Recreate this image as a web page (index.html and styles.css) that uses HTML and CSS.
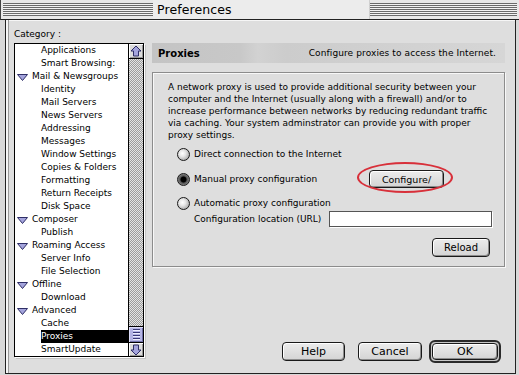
FILE: index.html
```html
<!DOCTYPE html>
<html>
<head>
<meta charset="utf-8">
<link rel="stylesheet" href="styles.css">
</head>
<body>
<div class="screen">
  <div class="titlebar">
    <div class="stripes stripes-left"></div>
    <div class="title">Preferences</div>
    <div class="stripes stripes-right"></div>
  </div>
  <div class="frame">
    <div class="window">
      <div class="col-left">
        <div class="cat-label">Category :</div>
        <div class="listbox">
          <ul class="tree">
            <li class="child">Applications</li>
            <li class="child">Smart Browsing:</li>
            <li class="parent"><svg class="disc" width="11" height="7" viewBox="0 0 11 7"><path d="M0.5 0.5 H10.5 L5.5 6.5 Z" fill="#a4a4dc" stroke="#2e2e66"/></svg>Mail &amp; Newsgroups</li>
            <li class="child">Identity</li>
            <li class="child">Mail Servers</li>
            <li class="child">News Servers</li>
            <li class="child">Addressing</li>
            <li class="child">Messages</li>
            <li class="child">Window Settings</li>
            <li class="child">Copies &amp; Folders</li>
            <li class="child">Formatting</li>
            <li class="child">Return Receipts</li>
            <li class="child">Disk Space</li>
            <li class="parent"><svg class="disc" width="11" height="7" viewBox="0 0 11 7"><path d="M0.5 0.5 H10.5 L5.5 6.5 Z" fill="#a4a4dc" stroke="#2e2e66"/></svg>Composer</li>
            <li class="child">Publish</li>
            <li class="parent"><svg class="disc" width="11" height="7" viewBox="0 0 11 7"><path d="M0.5 0.5 H10.5 L5.5 6.5 Z" fill="#a4a4dc" stroke="#2e2e66"/></svg>Roaming Access</li>
            <li class="child">Server Info</li>
            <li class="child">File Selection</li>
            <li class="parent"><svg class="disc" width="11" height="7" viewBox="0 0 11 7"><path d="M0.5 0.5 H10.5 L5.5 6.5 Z" fill="#a4a4dc" stroke="#2e2e66"/></svg>Offline</li>
            <li class="child">Download</li>
            <li class="parent"><svg class="disc" width="11" height="7" viewBox="0 0 11 7"><path d="M0.5 0.5 H10.5 L5.5 6.5 Z" fill="#a4a4dc" stroke="#2e2e66"/></svg>Advanced</li>
            <li class="child">Cache</li>
            <li class="child"><span class="sel">Proxies</span></li>
            <li class="child">SmartUpdate</li>
          </ul>
          <div class="scrollbar">
            <div class="sb-arrow sb-up"><svg width="12" height="12" viewBox="0 0 12 12"><path d="M6 1 L11 6 H8.5 V11 H3.5 V6 H1 Z" fill="#a4a4dc" stroke="#2e2e66" stroke-linejoin="round"/></svg></div>
            <div class="sb-track"></div>
            <div class="sb-thumb"><span></span><span></span><span></span><span></span></div>
            <div class="sb-arrow sb-down"><svg width="12" height="12" viewBox="0 0 12 12"><path d="M6 11 L11 6 H8.5 V1 H3.5 V6 H1 Z" fill="#a4a4dc" stroke="#2e2e66" stroke-linejoin="round"/></svg></div>
          </div>
        </div>
      </div>
      <div class="col-right">
        <div class="panel-head">
          <span class="ph-title">Proxies</span>
          <span class="ph-desc">Configure proxies to access the Internet.</span>
        </div>
        <div class="groupbox">
          <p class="intro">A network proxy is used to provide additional security between your<br>computer and the Internet (usually along with a firewall) and/or to<br>increase performance between networks by reducing redundant traffic<br>via caching. Your system adminstrator can provide you with proper<br>proxy settings.</p>
          <div class="radio-row row-direct"><span class="radio"></span><span class="rlabel">Direct connection to the Internet</span></div>
          <div class="radio-row row-manual"><span class="radio on"></span><span class="rlabel rlabel-fixed">Manual proxy configuration</span><span class="btn-wrap"><button class="btn btn-config">Configure/</button><span class="circle"></span></span></div>
          <div class="radio-row row-auto"><span class="radio"></span><span class="rlabel">Automatic proxy configuration</span></div>
          <div class="url-row"><span class="url-label">Configuration location (URL)</span><span class="field"></span></div>
          <div class="reload-row"><button class="btn btn-reload">Reload</button></div>
        </div>
        <div class="dialog-buttons">
          <button class="btn btn-help">Help</button>
          <button class="btn btn-cancel">Cancel</button>
          <span class="default-ring"><button class="btn btn-ok">OK</button></span>
        </div>
      </div>
    </div>
  </div>
</div>
</body>
</html>
```
FILE: styles.css
```css
* { box-sizing: border-box; }
html, body { margin: 0; padding: 0; }
body {
  width: 519px;
  height: 375px;
  background: #e6e6e6;
  font-family: "DejaVu Sans", "Liberation Sans", sans-serif;
  font-size: 9px;
  color: #000;
  overflow: hidden;
}
.screen { width: 519px; height: 375px; }

/* title bar */
.titlebar {
  height: 20px;
  display: flex;
  background: #e8e8e8;
  border-bottom: 1px solid #222;
  border-left: 1px solid #444;
}
.stripes {
  height: 13px;
  margin-top: 3px;
  background: repeating-linear-gradient(to bottom, #6a6a6a 0 1px, #f2f2f2 1px 2px);
}
.stripes-left { width: 150px; margin-left: 2px; }
.title {
  width: 217px;
  padding-left: 4px;
  font-size: 12.5px;
  line-height: 19px;
  letter-spacing: 0.1px;
  background: #ececec;
  border-right: 1px solid #cfcfcf;
}
.stripes-right { flex: 1; margin-right: 2px; }

/* frame */
.frame {
  padding-left: 5px;
  height: 355px;
  background: #d8d8d8;
}
.window {
  width: 511px;
  height: 354px;
  display: flex;
  gap: 8px;
  background: #dedede;
  border-left: 1px solid #222;
  border-right: 1px solid #222;
  border-bottom: 1px solid #222;
  box-shadow: inset 2px 0 0 #f6f6f6, inset 3px 0 0 #9a9a9a, inset 0 1px 0 #f6f6f6;
  padding: 8px 11px 10px 8px;
}

/* left column */
.col-left { width: 130px; display: flex; flex-direction: column; }
.cat-label { height: 12px; line-height: 12px; margin-bottom: 3px; }
.listbox {
  height: 314px;
  display: flex;
  border: 1px solid #000;
  background: #fff;
  box-shadow: 1px 1px 0 #fff, 2px 2px 0 #c4c4c4;
}
.tree { list-style: none; margin: 0; padding: 0; width: 113px; }
.tree li { height: 13px; line-height: 13px; white-space: nowrap; overflow: hidden; }
.tree .child { padding-left: 26px; }
.tree .parent { padding-left: 2px; display: flex; align-items: center; }
.disc { display: block; margin-right: 4px; margin-top: 1px; }
.sel { display: block; background: #000; color: #fff; }

.scrollbar {
  width: 15px;
  border-left: 1px solid #000;
  display: flex;
  flex-direction: column;
}
.sb-arrow {
  height: 15px;
  background: #dcdcdc;
  display: flex;
  align-items: center;
  justify-content: center;
  box-shadow: inset 1px 1px 0 #fff, inset -1px -1px 0 #999;
}
.sb-up { border-bottom: 1px solid #000; }
.sb-track {
  flex: 1;
  background-image: repeating-conic-gradient(#9c9c9c 0 25%, #e4e4e4 0 50%);
  background-size: 2px 2px;
}
.sb-thumb {
  height: 17px;
  border-top: 1px solid #000;
  border-bottom: 1px solid #000;
  background: #b4b4e4;
  display: flex;
  flex-direction: column;
  justify-content: center;
  align-items: center;
  gap: 1px;
  box-shadow: inset 1px 1px 0 #dcdcf8, inset -1px -1px 0 #7070a8;
}
.sb-thumb span { display: block; width: 7px; height: 1px; background: #3a3a78; box-shadow: 0 1px 0 #eeeeff; margin-bottom: 1px; }
.sb-down { height: 13px; }

/* right column */
.col-right { flex: 1; display: flex; flex-direction: column; padding-top: 15px; }
.panel-head {
  height: 20px;
  display: flex;
  align-items: center;
  justify-content: space-between;
  padding: 0 9px 0 6px;
  background: linear-gradient(to right, #c4c4c4 0%, #c8c8c8 25%, #d2d2d2 30%, #cccccc 38%, #d6d6d6 100%);
}
.ph-title { font-weight: bold; font-size: 10px; }
.ph-desc { letter-spacing: 0.1px; }
.groupbox {
  margin-top: 9px;
  height: 195px;
  border: 1px solid #8c8c8c;
  box-shadow: inset 1px 1px 0 #f8f8f8, 1px 1px 0 #f8f8f8;
  padding: 8px 12px 0 15px;
}
.intro { margin: 0; line-height: 12px; white-space: nowrap; }

.radio-row { display: flex; align-items: center; padding-left: 9px; }
.row-direct { height: 14px; margin-top: 6px; }
.row-manual { height: 18px; margin-top: 9px; }
.row-auto { height: 14px; margin-top: 8px; }
.radio {
  width: 13px;
  height: 13px;
  border-radius: 50%;
  border: 1px solid #1a1a1a;
  background: radial-gradient(circle at 40% 40%, #ffffff 0, #e6e6e6 35%, #a8a8a8 80%, #888 100%);
  margin-right: 4px;
  flex: none;
}
.radio.on { background: radial-gradient(circle at 50% 50%, #000 0, #000 2.6px, #505050 3.4px, #8a8a8a 6px); }
.rlabel-fixed { width: 175px; }

.btn {
  font-family: "DejaVu Sans", "Liberation Sans", sans-serif;
  font-size: 9.5px;
  color: #000;
  border: 1px solid #1a1a1a;
  border-radius: 4px;
  background: linear-gradient(#ececec, #d4d4d4);
  box-shadow: inset 1px 1px 0 #fff, inset -1px -1px 0 #8c8c8c;
  padding: 0;
  margin: 0;
}
.btn-wrap { position: relative; display: block; height: 18px; }
.btn-config { width: 75px; height: 18px; display: block; }
.circle {
  position: absolute;
  left: -12px;
  top: -8px;
  width: 96px;
  height: 31px;
  border: 2px solid #d8303a;
  border-radius: 50%;
}
.url-row { display: flex; align-items: center; height: 16px; margin-top: 1px; padding-left: 26px; }
.url-label { width: 135px; }
.field {
  width: 163px;
  height: 16px;
  background: #fff;
  border: 1px solid #555;
  box-shadow: 1px 1px 0 #fff;
}
.reload-row { display: flex; justify-content: flex-end; margin-top: 11px; padding-right: 2px; }
.btn-reload { width: 58px; height: 19px; font-size: 10px; }

.dialog-buttons {
  margin-top: auto;
  display: flex;
  justify-content: flex-end;
  align-items: center;
  padding-right: 4px;
  height: 23px;
}
.btn-help { width: 63px; height: 19px; font-size: 11px; margin-right: 13px; }
.btn-cancel { width: 64px; height: 19px; font-size: 11px; margin-right: 7px; }
.default-ring {
  display: block;
  border: 2px solid #2a2a2a;
  border-radius: 6px;
  padding: 1px;
  background: #c8c8c8;
}
.btn-ok { width: 66px; height: 17px; font-size: 11px; display: block; }
```
